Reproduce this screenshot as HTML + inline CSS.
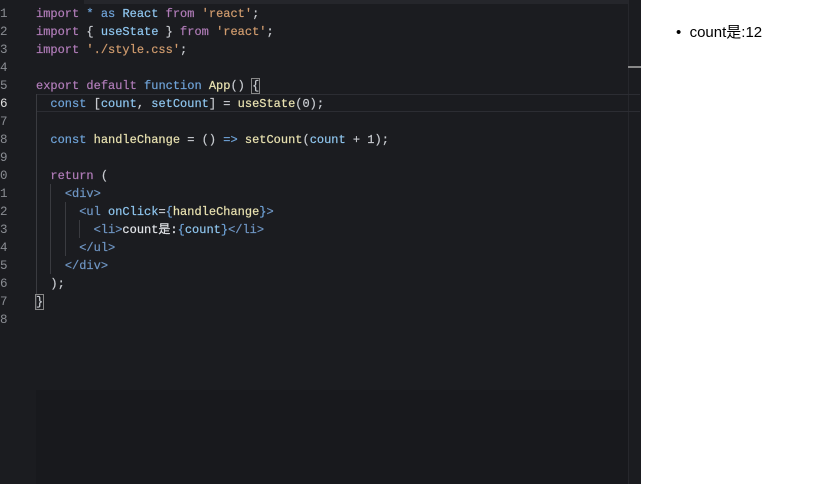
<!DOCTYPE html>
<html><head><meta charset="utf-8"><style>
body{margin:0;width:828px;height:484px;background:#1b1c20;overflow:hidden;position:relative;font-family:"Liberation Mono","Noto Sans CJK SC",monospace;}
.top{position:absolute;left:84px;top:0;width:544px;height:4px;background:#25262b}
.low{position:absolute;left:36px;top:390px;width:592px;height:94px;background:#18191d}
.ln{position:absolute;left:0;width:14px;text-align:left;color:#8a8d93;font-size:12.5px}
.code{position:absolute;left:36px;font-size:12px;white-space:pre;color:#c9ccd1;line-height:18px;-webkit-text-stroke:0.2px}
.k{color:#b07cb8}.b{color:#6fa3d8}.s{color:#d19c6e}.f{color:#e8e1b0}.v{color:#8fc6ef}.t{color:#6f96c4}.w{color:#e2e4e8}
.hl{position:absolute;left:36px;top:94px;width:604px;height:18px;border-top:1px solid #2c2d33;border-bottom:1px solid #2c2d33;box-sizing:border-box}
.g{position:absolute;width:1px;background:#3a3b40}
.right{position:absolute;left:641px;top:0;width:187px;height:484px;background:#fff;font-family:"Liberation Sans","Noto Sans CJK SC",sans-serif;font-size:15px;color:#000}
.vl{position:absolute;left:628px;top:0;width:1px;height:484px;background:#26272c}
</style></head><body>
<div class="top"></div><div class="low"></div>
<div class="vl"></div>
<div style="position:absolute;left:628px;top:66px;width:13px;height:2px;background:#888"></div>
<div class="hl"></div>
<div class="g" style="left:36px;top:94px;height:216px"></div>
<div class="g" style="left:50px;top:184px;height:90px"></div>
<div class="g" style="left:65px;top:202px;height:54px"></div>
<div class="g" style="left:79px;top:220px;height:18px"></div>
<div class="ln" style="top:5px;line-height:18px">1<br>2<br>3<br>4<br>5<br><span style="color:#e0e0e0">6</span><br>7<br>8<br>9<br>0<br>1<br>2<br>3<br>4<br>5<br>6<br>7<br>8</div>
<div class="code" style="top:5px"><span class="k">import</span> <span class="b">*</span> <span class="b">as</span> <span class="v">React</span> <span class="k">from</span> <span class="s">'react'</span>;
<span class="k">import</span> { <span class="v">useState</span> } <span class="k">from</span> <span class="s">'react'</span>;
<span class="k">import</span> <span class="s">'./style.css'</span>;

<span class="k">export</span> <span class="k">default</span> <span class="b">function</span> <span class="f">App</span>() <span style="outline:1px solid #888">{</span>
  <span class="b">const</span> [<span class="v">count</span>, <span class="v">setCount</span>] = <span class="f">useState</span>(0);

  <span class="b">const</span> <span class="f">handleChange</span> = () <span class="b">=&gt;</span> <span class="f">setCount</span>(<span class="v">count</span> + 1);

  <span class="k">return</span> (
    <span class="t">&lt;div&gt;</span>
      <span class="t">&lt;ul</span> <span class="v">onClick</span>=<span class="b">{</span><span class="f">handleChange</span><span class="b">}</span><span class="t">&gt;</span>
        <span class="t">&lt;li&gt;</span><span class="w">count是:</span><span class="b">{</span><span class="v">count</span><span class="b">}</span><span class="t">&lt;/li&gt;</span>
      <span class="t">&lt;/ul&gt;</span>
    <span class="t">&lt;/div&gt;</span>
  );
<span style="outline:1px solid #888">}</span>
</div>
<div class="right"><div style="position:absolute;left:35px;top:21px">•&nbsp; count是:12</div></div>
</body></html>
